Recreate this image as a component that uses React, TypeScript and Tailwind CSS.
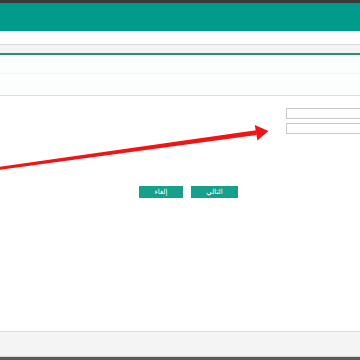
import React from 'react';

function Arrow() {
  return (
    <svg
      className="pointer-events-none absolute inset-0"
      width={360}
      height={360}
      viewBox="0 0 360 360"
    >
      <polygon points="0,166.8 256,130.3 256.7,134.9 0,169.8" fill="#f01414" />
      <polygon points="268.5,131 254.8,125 257.4,140.4" fill="#f01414" />
    </svg>
  );
}

export default function App() {
  return (
    <div
      className="relative flex h-[360px] w-[360px] flex-col overflow-hidden bg-white"
      style={{ fontFamily: '"DejaVu Sans", "Noto Sans", sans-serif' }}
    >
      {/* top bars */}
      <div className="h-[3px] bg-[#3b3b3b]" />
      <div className="h-[29px] border-b border-[#d3f1ee] bg-[#009b8a]" />
      <div className="h-[13px] border-b border-[#d9d9d9] bg-white" />
      <div className="h-[10px] border-b-2 border-[#2b8d7f] bg-[#f3f3f3]" />

      {/* page title area */}
      <div className="flex h-[41px] flex-col border-b border-[#dcdcdc] bg-[#fcfdfd]">
        <div className="h-[19px] border-b border-[#f5f5f5]" />
      </div>

      {/* form */}
      <div className="flex flex-1 flex-col">
        <div className="mt-[12px] flex flex-col items-end gap-[4px]">
          <input className="-mr-[10px] h-[11px] w-[84px] border border-[#c9c9c9] bg-white" />
          <input className="-mr-[10px] h-[11px] w-[84px] border border-[#c9c9c9] bg-white" />
        </div>

        <div dir="rtl" className="mt-[52px] flex justify-center gap-[8px] pl-[17px]">
          <button className="flex h-[12px] w-[47px] items-center justify-center bg-[#16a08c] text-[7px] leading-none text-white">
            التالي
          </button>
          <button className="flex h-[12px] w-[44px] items-center justify-center bg-[#16a08c] text-[7px] leading-none text-white">
            إلغاء
          </button>
        </div>
      </div>

      {/* footer */}
      <div className="h-[26px] border-y border-[#dadada] bg-[#f4f4f4]" />
      <div className="h-[3px] bg-[#5a5a5a]" />

      <Arrow />
    </div>
  );
}
